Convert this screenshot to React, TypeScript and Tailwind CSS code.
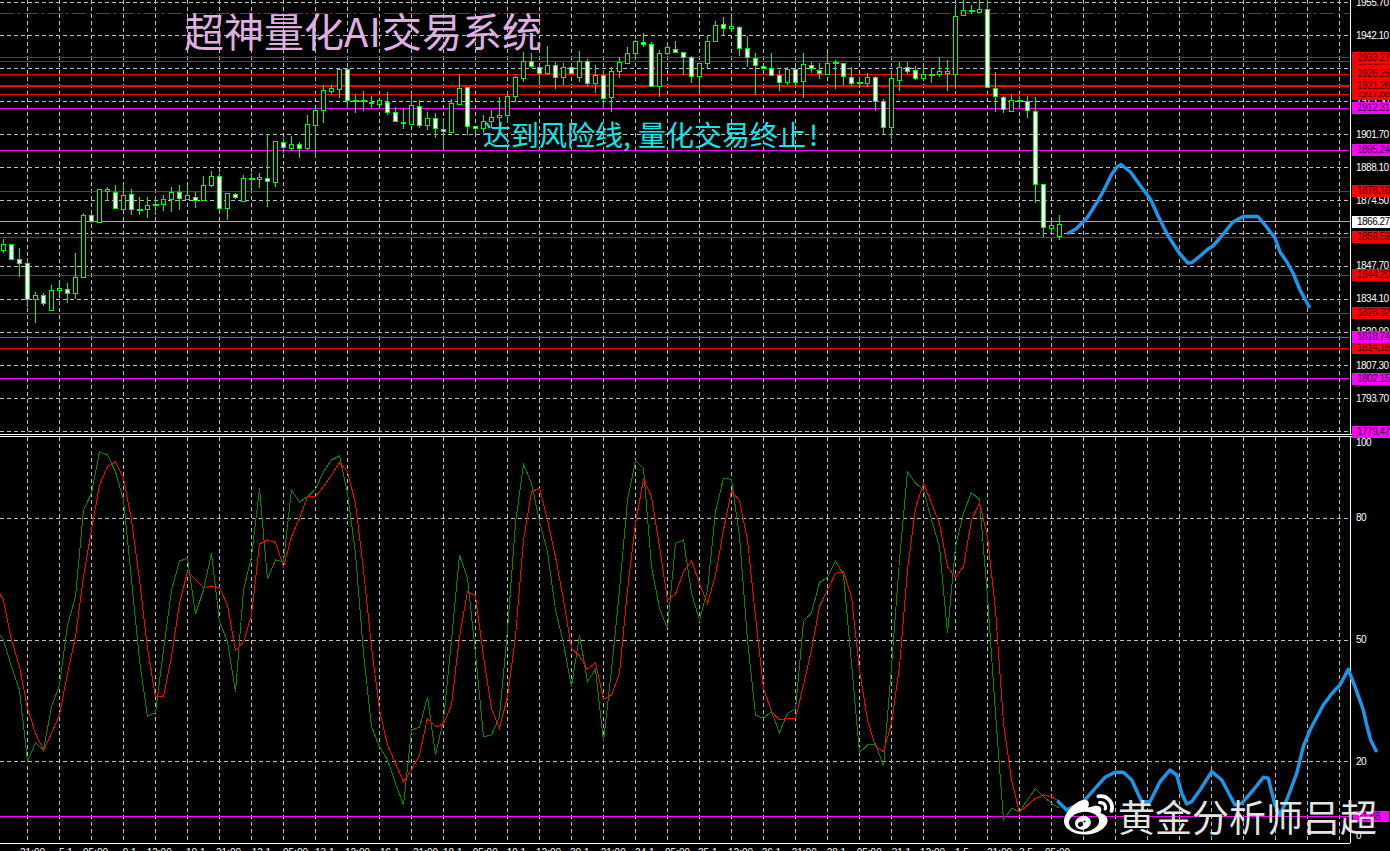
import { FaWeibo } from "react-icons/fa";

type Candle = [number, number, number, number, number];
// [filled, body top, body bottom, wick top, wick bottom], in 1/3 px
const candles: Candle[] = [
  [0,733,751,718,758],[1,733,778,733,778],[1,778,790,745,830],[1,790,898,775,922],[0,886,898,875,968],[1,886,910,880,918],
  [0,871,929,855,930],[0,865,871,845,892],[1,866,880,850,910],[0,832,880,760,898],[0,646,832,640,835],[1,646,662,640,668],
  [0,568,667,568,668],[0,568,574,560,602],[1,577,625,555,628],[0,586,626,552,632],[1,583,628,568,645],[0,626,628,592,645],
  [0,616,628,590,655],[0,613,616,592,645],[0,598,613,585,632],[0,577,598,560,636],[1,577,595,555,630],[0,586,596,555,600],
  [1,590,600,575,624],[0,556,601,528,602],[0,529,556,512,560],[1,529,625,520,632],[0,580,625,580,660],[1,581,592,578,598],
  [0,535,602,524,604],[0,535,538,520,568],[0,532,538,520,565],[1,533,544,403,620],[0,424,545,424,560],[1,425,440,415,458],
  [0,431,445,408,450],[1,431,445,425,475],[0,373,445,345,450],[0,331,374,325,472],[0,271,331,255,370],[0,265,272,255,282],
  [0,208,268,208,295],[1,208,301,205,325],[0,300,303,285,340],[0,300,303,272,332],[1,305,310,288,325],[0,301,311,301,311],
  [1,305,337,275,345],[1,337,363,320,365],[1,365,370,328,386],[0,316,371,285,372],[1,317,376,300,384],[0,355,376,335,390],
  [1,355,385,340,415],[1,386,393,355,445],[0,310,395,298,395],[0,263,312,225,315],[1,262,378,262,405],[1,379,385,378,405],
  [0,364,385,345,400],[0,352,364,330,385],[0,346,352,292,380],[0,289,346,278,370],[0,232,287,228,305],[0,182,233,155,245],
  [1,183,199,158,205],[1,200,220,198,255],[0,196,220,138,225],[1,196,232,185,268],[0,200,232,190,255],[1,200,220,195,222],
  [0,182,230,152,245],[1,183,250,178,262],[0,225,250,195,280],[1,225,295,210,325],[0,212,292,200,335],[0,185,212,170,235],
  [0,160,190,142,192],[0,124,160,120,180],[1,125,133,100,140],[1,133,257,125,258],[0,160,258,150,290],[0,142,160,135,165],
  [1,146,157,122,160],[1,157,170,156,225],[1,170,228,168,248],[0,190,228,188,275],[0,122,190,105,205],[0,76,122,62,125],
  [1,73,85,52,105],[0,78,85,52,95],[1,80,145,78,168],[1,145,172,108,200],[1,175,195,158,285],[1,198,203,198,205],
  [1,205,225,158,228],[1,225,247,210,272],[0,208,247,200,255],[1,208,245,200,258],[0,193,242,160,295],[1,194,205,185,220],
  [1,211,220,188,238],[0,190,222,160,225],[0,187,189,180,268],[1,190,228,188,255],[1,230,250,202,258],[0,247,250,230,262],
  [0,230,250,218,262],[1,230,303,228,332],[1,304,382,298,403],[0,235,382,210,418],[0,201,240,187,272],[1,202,214,187,221],
  [1,211,235,198,240],[0,223,235,198,240],[0,222,224,203,249],[0,213,223,172,231],[0,213,220,180,272],[0,48,221,15,266],
  [0,30,46,0,46],[0,31,34,15,42],[0,28,36,0,39],[1,28,262,0,262],[1,264,289,215,336],[1,290,327,288,339],[0,299,333,284,336],
  [0,299,302,288,322],[1,302,330,288,353],[1,333,552,291,609],[1,552,682,552,710],[0,675,684,667,699],[0,673,707,644,720],
];

const green = [600,680,750,965,908,930,800,735,555,470,210,160,36,45,95,180,420,660,828,818,630,450,363,355,522,450,340,545,605,755,450,350,145,418,360,365,150,186,170,148,95,60,48,160,340,640,860,920,960,1030,1095,870,862,770,945,840,600,345,415,640,890,885,830,570,250,72,130,245,335,510,610,740,585,725,688,905,690,450,180,62,85,380,505,565,310,300,460,540,450,215,115,118,290,600,825,835,815,878,820,808,545,518,428,412,362,405,670,938,915,912,978,680,360,95,130,150,240,320,580,320,220,157,180,470,820,1140,1105,1115,1080,1045,1070,1090,1105];
const red = [480,600,680,805,880,932,880,825,700,590,410,270,135,80,65,115,240,420,625,770,770,650,490,395,418,443,438,443,495,632,605,525,312,300,307,380,290,235,170,170,140,105,68,95,190,390,620,810,915,970,1025,990,945,835,860,852,795,590,455,468,650,805,865,770,590,300,155,145,240,350,480,625,648,688,668,778,765,700,450,250,118,170,320,480,462,395,362,430,490,405,270,152,182,300,530,745,815,840,835,835,735,630,500,450,400,395,470,690,840,920,935,850,680,390,205,130,190,250,380,412,380,240,188,290,510,850,1020,1118,1095,1075,1065,1070,1085];

const linePath = (vals: number[], start: number) =>
  `M-4.5 ${(440 + start / 3).toFixed(1)}` + vals.map((v, k) => ` L${k * 8 + 3.5} ${(440 + v / 3).toFixed(1)}`).join("");

const blueUpper = "M1068.6 233 L1076 229 L1087 218 L1096.6 203 L1103.4 191 L1111.9 174 L1117 167 L1121 164.5 L1130.5 172 L1140.6 186 L1150.7 199.5 L1157.5 214.7 L1167.6 235 L1179.5 253.5 L1188 263 L1192 262.5 L1200 256 L1208 249 L1213 246 L1220 238 L1233 222 L1243 216.5 L1258 216.5 L1265 225 L1275 238 L1280 252 L1287 262 L1293 273 L1300 290 L1309 306.5";
const blueLower = "M1058.3 801.7 L1066.7 810 L1083.3 801.7 L1096.7 786.7 L1105 777.3 L1115 772.3 L1123.3 772.3 L1131.7 780 L1141.7 801.7 L1150 801.7 L1160 781.7 L1170 770 L1176.7 775 L1181.7 793.3 L1186.7 804 L1191.7 801.7 L1200 790 L1211.7 771.7 L1221.7 780 L1235 805 L1241.7 803.3 L1253.3 790 L1263.3 777.3 L1268.3 778.3 L1275 805 L1280 815 L1286.7 800 L1296.7 773.3 L1303.3 746.7 L1310 730 L1323.3 705 L1333.3 691.7 L1340 685 L1348.3 669.3 L1355 686.7 L1363.3 710 L1366.7 725 L1370.7 740 L1376 750.7";

const gridX = Array.from({ length: 42 }, (_, i) => 27.5 + 32 * i);
const gridYTop = Array.from({ length: 14 }, (_, i) => 2.5 + 33 * i);

const levels: [number, string, number][] = [
  [57.5, "#f00000", 1], [61.5, "#f00000", 1], [74.5, "#ff0000", 1], [86, "#ff0000", 2], [94.5, "#ff0000", 1],
  [108.5, "#ff00ff", 1], [150.5, "#ff00ff", 1], [191.5, "#f00000", 1], [221.5, "#a8a8a8", 1], [237.5, "#f00000", 1],
  [275.5, "#f00000", 1], [313.5, "#f00000", 1], [337.5, "#ff00ff", 1], [348.5, "#ff0000", 1], [378.5, "#ff00ff", 1],
];

const axisTop: [string, number][] = [
  ["1955.70", 3], ["1942.10", 35.5], ["1928.90", 68], ["1915.30", 101], ["1901.70", 134.5], ["1888.10", 167.5], ["1874.50", 200.5],
  ["1847.70", 266], ["1834.10", 299], ["1820.90", 332], ["1807.30", 365.5], ["1793.70", 398.5],
];
const red1 = "bg-[#ff0000] text-[#400000]";
const mag = "bg-[#ff00ff] text-[#300030]";
// later entries paint over earlier ones: higher prices end up on top
const boxesTop: [string, number, string][] = [
  ["1779.47", 432, mag], ["1802.15", 378.5, mag], ["1814.16", 348, red1], ["1818.74", 337, mag], ["1828.32", 313, red1],
  ["1844.20", 275, red1], ["1859.59", 237, red1], ["1866.27", 221.5, "bg-white text-black"], ["1878.16", 191, red1],
  ["1895.24", 150, mag], ["1912.31", 107.5, mag], ["1917.86", 94, red1], ["1921.26", 86, red1], ["1926.25", 74, red1],
  ["1931.76", 62, red1], ["1933.27", 58, red1],
];
const axisBottom: [string, number][] = [["100", 443], ["80", 518], ["50", 640], ["20", 762], ["0", 836]];
const times: [string, number][] = [
  ["21:00", 20], ["5.1", 59], ["05:00", 83], ["9.1", 122.7], ["12:00", 146.7], ["10.1", 186], ["21:00", 216], ["12.1", 251.7],
  ["05:00", 283], ["13.1", 315], ["12:00", 345], ["16.1", 380], ["21:00", 413], ["18.1", 443], ["05:00", 472.7], ["19.1", 506.7],
  ["12:00", 536], ["20.1", 570], ["21:00", 600.7], ["24.1", 635], ["05:00", 665], ["25.1", 698], ["12:00", 728], ["26.1", 761.7],
  ["21:00", 791.7], ["28.1", 826.7], ["05:00", 856.7], ["31.1", 891.7], ["12:00", 920], ["1.5", 955], ["21:00", 987], ["3.5", 1019], ["05:00", 1045],
];

function App() {
  return (
    <div className="relative w-[1390px] h-[851px] overflow-hidden bg-black flex flex-col font-['Liberation_Sans',sans-serif] text-white">
      {/* price panel */}
      <div className="flex h-[435px] border-b border-white shrink-0">
        <svg className="w-[1350px] h-[434px] shrink-0" viewBox="0 0 1350 434">
          <g stroke="#bdbdbd" strokeWidth="1" strokeDasharray="4 3" shapeRendering="crispEdges">
            {gridX.map((x) => <line key={x} x1={x} x2={x} y1="0" y2="434" />)}
            {gridYTop.map((y) => <line key={y} x1="0" x2="1350" y1={y} y2={y} />)}
          </g>
          <line x1="0" x2="1350" y1="13.5" y2="13.5" stroke="#c81010" strokeWidth="1" strokeDasharray="14 4 2 4" shapeRendering="crispEdges" />
          <g shapeRendering="crispEdges">
            {levels.map(([y, c, w]) => <line key={y} x1="0" x2="1350" y1={y} y2={y} stroke={c} strokeWidth={w} />)}
          </g>
          <g shapeRendering="crispEdges" stroke="#00ff00" strokeWidth="1">
            {candles.map(([f, bt, bb, wt, wb], k) => {
              const c = k * 8 + 3.5;
              const top = Math.round(bt / 3) + 0.5;
              const bot = Math.round(bb / 3) + 0.5;
              return (
                <g key={k}>
                  <line x1={c} x2={c} y1={wt / 3} y2={wb / 3} />
                  {bb - bt < 4 ? (
                    <line x1={c - 2.5} x2={c + 3} y1={top} y2={top} strokeWidth="2" />
                  ) : (
                    <rect x={c - 2} y={top} width="4" height={bot - top} fill={f ? "#ffffff" : "#000000"} />
                  )}
                </g>
              );
            })}
          </g>
          <path d={blueUpper} fill="none" stroke="#1c97e8" strokeWidth="3.5" strokeLinejoin="round" strokeLinecap="round" />
        </svg>
        <div className="relative flex-1 border-l border-white text-[10px] leading-[12px] tracking-[-0.5px]">
          {axisTop.map(([t, y]) => (
            <span key={t} className="absolute left-[5px]" style={{ top: y - 6 }}>{t}</span>
          ))}
          {boxesTop.map(([t, y, c]) => (
            <span key={t} className={`absolute left-[1px] right-0 h-[12px] pl-[5px] ${c}`} style={{ top: y - 6 }}>{t}</span>
          ))}
        </div>
      </div>
      <div className="h-px shrink-0 bg-black" />
      {/* oscillator panel */}
      <div className="flex flex-1 flex-col border-t border-white min-h-0">
        <div className="flex h-[406px] shrink-0">
          <svg className="relative z-10 w-[1350px] h-[406px] shrink-0 overflow-visible" viewBox="0 437 1350 406">
            <g stroke="#bdbdbd" strokeWidth="1" strokeDasharray="4 3" shapeRendering="crispEdges">
              {gridX.map((x) => <line key={x} x1={x} x2={x} y1="437" y2="843" />)}
              {[518.5, 640.5, 761.5].map((y) => <line key={y} x1="0" x2="1350" y1={y} y2={y} />)}
            </g>
            <line x1="0" x2="1350" y1="816.5" y2="816.5" stroke="#ff00ff" strokeWidth="1" shapeRendering="crispEdges" />
            <path d={linePath(green, 565)} fill="none" stroke="#008a00" strokeWidth="1" shapeRendering="crispEdges" />
            <path d={linePath(red, 438)} fill="none" stroke="#ff0000" strokeWidth="1" shapeRendering="crispEdges" />
            <path d={blueLower} fill="none" stroke="#1c97e8" strokeWidth="3.5" strokeLinejoin="round" strokeLinecap="round" />
          </svg>
          <div className="relative flex-1 border-l border-white text-[10px] leading-[12px] tracking-[-0.5px]">
            {axisBottom.map(([t, y]) => (
              <span key={t} className="absolute left-[5px]" style={{ top: y - 6 - 437 }}>{t}</span>
            ))}
            <span className="absolute left-[2px] w-[36px] h-[11px] pl-[5px] bg-[#ff00ff] text-[#300030]" style={{ top: 811 - 437 }}>11.68</span>
          </div>
        </div>
        <div className="relative flex-1 border-t border-white w-[1350px] text-[10px] leading-[12px]">
          {times.map(([t, x], i) => (
            <span key={i} className="absolute top-[3px]" style={{ left: x }}>{t}</span>
          ))}
        </div>
      </div>
      {/* overlays */}
      <div className="absolute z-20 left-[184px] top-[6px] text-[40px] leading-[48px] whitespace-nowrap text-[#deb0e0] font-['Noto_Sans_CJK_SC',sans-serif]">
        超神量化<span className="tracking-[1px]">AI</span>交易系统
      </div>
      <div className="absolute z-20 left-[483px] top-[114px] text-[28px] leading-[40px] whitespace-nowrap text-[#12e6e6] font-['Noto_Sans_CJK_SC',sans-serif]">
        达到风险线<span className="inline-block w-[15px]">,</span>量化交易终止<span className="inline-block w-[15px] text-center">!</span>
      </div>
      <div className="absolute z-20 left-[1064px] top-[791px] flex items-center gap-[4px] text-[#e4e4e4]">
        <FaWeibo className="text-white w-[50px] h-[50px]" />
        <span className="text-[37px] leading-[46px] whitespace-nowrap font-['Noto_Sans_CJK_SC',sans-serif]">黄金分析师吕超</span>
      </div>
    </div>
  );
}

export default App;
